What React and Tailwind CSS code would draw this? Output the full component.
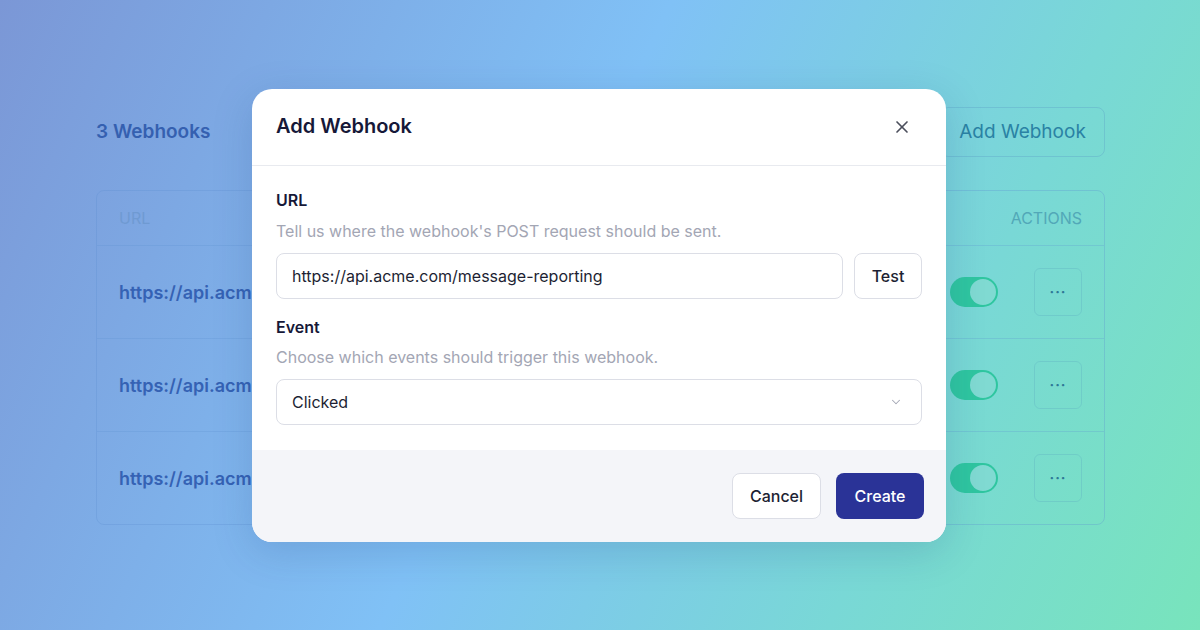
import { X, ChevronDown } from 'lucide-react';

const rows = [1, 2, 3];

const BackgroundPage = () => {
    return (
        <div className="pl-[96px] pr-[95px] pt-[107px]">
            <div className="flex items-center justify-between h-[50px]">
                <h2 className="text-[19px] font-semibold text-[#3560b0]">3 Webhooks</h2>
                <button className="h-[50px] w-[165px] rounded-lg border border-[#5fa4c8]/40 text-[19px] text-[#2a82a4]">
                    Add Webhook
                </button>
            </div>

            <div className="mt-[33px] rounded-lg border border-[#5c8fd0]/30">
                <div className="flex items-center justify-between h-[54px] px-[22px] text-[16px] uppercase text-[#6f9ad2]">
                    <span>URL</span>
                    <span className="text-[#52a8b8]">Actions</span>
                </div>
                {rows.map((row) => (
                    <div
                        key={row}
                        className="flex items-center justify-between h-[93px] border-t border-[#5c8fd0]/25 pl-[22px] pr-[22px]"
                    >
                        <span className="text-[18px] font-semibold text-[#3562b4]">
                            https://api.acme.com/message-reporting
                        </span>
                        <div className="flex items-center gap-[36px]">
                            <div className="relative h-[30px] w-[48px] rounded-full bg-[#2fc6a0]">
                                <div className="absolute right-[2px] top-[2px] h-[26px] w-[26px] rounded-full bg-[#80dad2]"></div>
                            </div>
                            <div className="flex h-[48px] w-[48px] items-center justify-center rounded-md border border-[#5fb0c0]/35 text-[#2e7896] text-[14px] font-bold leading-none tracking-[1px]">
                                ···
                            </div>
                        </div>
                    </div>
                ))}
            </div>
        </div>
    );
};

const App = () => {
    return (
        <div
            className="relative h-[630px] w-[1200px] overflow-hidden bg-[linear-gradient(115deg,#7b97d6_0%,#80c1f6_45%,#79d8d6_75%,#78e4bc_100%)]"
            style={{ fontFamily: 'Inter, "Noto Sans", sans-serif' }}
        >
            <BackgroundPage />

            <div className="absolute inset-0 flex items-center justify-center">
                <div className="-ml-[2px] mt-[1px] w-[694px] overflow-hidden rounded-[20px] bg-white shadow-[0_10px_40px_rgba(30,60,120,0.18)]">
                    <div className="flex h-[77px] items-center justify-between border-b border-[#e8eaef] pl-[24px] pr-[34px]">
                        <h3 className="-mt-[2px] text-[20px] font-semibold text-[#161838]">Add Webhook</h3>
                        <X className="h-[20px] w-[20px] text-[#4b4f5c]" strokeWidth={2} />
                    </div>

                    <div className="px-[24px] pt-[24px] pb-[25px]">
                        <label className="block text-[16px] font-semibold leading-[20px] text-[#161838]">URL</label>
                        <p className="mt-[11px] text-[16px] leading-[20px] text-[#a3a6b4]">
                            Tell us where the webhook's POST request should be sent.
                        </p>
                        <div className="mt-[12px] flex gap-[11px]">
                            <div className="flex h-[46px] flex-1 items-center rounded-lg border border-[#dcdee6] px-[15px] text-[16px] text-[#1d1f33]">
                                https://api.acme.com/message-reporting
                            </div>
                            <button className="h-[46px] w-[68px] rounded-lg border border-[#dcdee6] text-[16px] font-medium text-[#1d1f33]">
                                Test
                            </button>
                        </div>

                        <label className="mt-[18px] block text-[16px] font-semibold leading-[20px] text-[#161838]">Event</label>
                        <p className="mt-[10px] text-[16px] leading-[20px] text-[#a3a6b4]">
                            Choose which events should trigger this webhook.
                        </p>
                        <div className="mt-[12px] flex h-[46px] items-center justify-between rounded-lg border border-[#dcdee6] pl-[15px] pr-[18px] text-[16px] text-[#1d1f33]">
                            <span>Clicked</span>
                            <ChevronDown className="h-[14px] w-[14px] text-[#a3a6b4]" strokeWidth={1.75} />
                        </div>
                    </div>

                    <div className="flex h-[92px] items-center justify-end gap-[15px] bg-[#f4f5f9] pr-[22px]">
                        <button className="h-[46px] w-[89px] rounded-lg border border-[#dcdee6] bg-white text-[16px] font-medium text-[#1d1f33]">
                            Cancel
                        </button>
                        <button className="h-[46px] w-[88px] rounded-lg bg-[#2a3397] text-[16px] font-medium text-white">
                            Create
                        </button>
                    </div>
                </div>
            </div>
        </div>
    );
};

export default App;
